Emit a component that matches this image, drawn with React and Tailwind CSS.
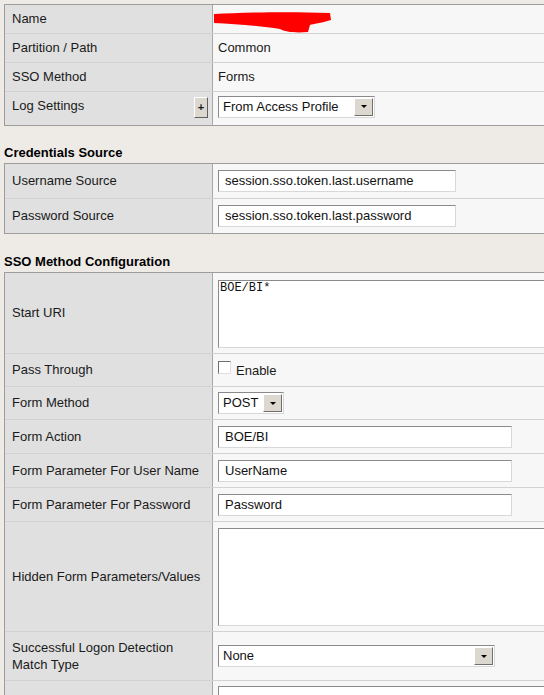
import React from 'react';

const font = { fontFamily: '"Liberation Sans", Arial, sans-serif' };

function Row({ label, h, last, children, labelClass = '' }) {
    return (
        <div className={`flex ${h} ${last ? '' : 'border-b border-[#d2d2d2]'}`}>
            <div className={`w-[208px] shrink-0 bg-[#e0e0e0] border-r border-[#a9a9a9] pl-[7px] pr-1 flex items-center ${labelClass}`}>
                {label}
            </div>
            <div className="flex-1 bg-[#f7f7f7] pl-[5px] flex items-center relative">
                {children}
            </div>
        </div>
    );
}

function Table({ children }) {
    return (
        <div className="ml-[4px] w-[620px] border border-[#9d9d9d] bg-white">
            {children}
        </div>
    );
}

function Heading({ children, h }) {
    return (
        <div className={`${h} flex items-end pl-[4px] pb-[1px] font-bold text-[13px] text-black`}>
            {children}
        </div>
    );
}

const inset = 'bg-white border border-t-[#8a8a8a] border-l-[#8a8a8a] border-b-[#d8d8d8] border-r-[#d8d8d8]';

function TextInput({ value, w }) {
    return (
        <div className={`${inset} ${w} h-[22px] flex items-center pl-[6px] text-[13px] text-[#111]`}>
            {value}
        </div>
    );
}

function DropBtn() {
    return (
        <div className="w-[19px] h-[18px] bg-[#dcd8d0] border border-t-[#ffffff] border-l-[#ffffff] border-b-[#6f6f6f] border-r-[#6f6f6f] flex items-center justify-center">
            <div className="w-0 h-0 border-l-[3px] border-r-[3px] border-t-[3px] border-l-transparent border-r-transparent border-t-black" />
        </div>
    );
}

function Select({ value, w, className = '' }) {
    return (
        <div className={`${inset} ${w} h-[22px] flex items-center justify-between pl-[4px] pr-[1px] text-[13px] text-[#111] ${className}`}>
            <span>{value}</span>
            <DropBtn />
        </div>
    );
}

function App() {
    return (
        <div className="w-[544px] h-[695px] overflow-hidden bg-[#eeebe7] text-[13px] text-[#1a1a1a]" style={font}>
            <div className="h-[4px]" />
            <Table>
                <Row label="Name" h="h-[29px]">
                    <svg className="absolute left-0 top-0" width="130" height="29" viewBox="0 0 130 29">
                        <path
                            d="M1,9 C27,8 67,6 117,8 L118,15 C108,18 100,19 97,20 L95,27 C82,28 72,27 67,24 C47,21 22,19 1,18 Z"
                            fill="#ff0000"
                        />
                    </svg>
                </Row>
                <Row label="Partition / Path" h="h-[29px]">Common</Row>
                <Row label="SSO Method" h="h-[29px]">Forms</Row>
                <Row label={
                    <div className="flex items-center justify-between w-full">
                        <span className="-mt-[6px]">Log Settings</span>
                        <div className="w-[14px] h-[21px] -mt-[3px] bg-[#dcd8d0] border border-t-white border-l-white border-b-[#5f5f5f] border-r-[#5f5f5f] flex items-center justify-center text-[11px] font-bold leading-none">+</div>
                    </div>
                } h="h-[33px]" last>
                    <Select value="From Access Profile" w="w-[157px]" className="-mt-[4px]" />
                </Row>
            </Table>

            <Heading h="h-[37px]">Credentials Source</Heading>
            <Table>
                <Row label="Username Source" h="h-[35px]">
                    <TextInput value="session.sso.token.last.username" w="w-[238px]" />
                </Row>
                <Row label="Password Source" h="h-[34px]" last>
                    <TextInput value="session.sso.token.last.password" w="w-[238px]" />
                </Row>
            </Table>

            <Heading h="h-[38px]">SSO Method Configuration</Heading>
            <Table>
                <Row label="Start URI" h="h-[81px]">
                    <div className={`${inset} w-[340px] h-[68px] self-start mt-[7px] pl-[1px] pt-[1px] text-[12px] leading-[13px] text-[#111]`} style={{ fontFamily: '"Liberation Mono", "Courier New", monospace' }}>
                        BOE/BI*
                    </div>
                </Row>
                <Row label="Pass Through" h="h-[33px]">
                    <div className="flex items-center gap-[5px]">
                        <div className="w-[13px] h-[13px] -mt-[5px] bg-white border border-t-[#707070] border-l-[#707070] border-b-[#e0e0e0] border-r-[#e0e0e0]" />
                        <span className="mt-[2px]">Enable</span>
                    </div>
                </Row>
                <Row label="Form Method" h="h-[33px]">
                    <Select value="POST" w="w-[66px]" />
                </Row>
                <Row label="Form Action" h="h-[34px]">
                    <TextInput value="BOE/BI" w="w-[294px]" />
                </Row>
                <Row label="Form Parameter For User Name" h="h-[34px]">
                    <TextInput value="UserName" w="w-[294px]" />
                </Row>
                <Row label="Form Parameter For Password" h="h-[34px]">
                    <TextInput value="Password" w="w-[294px]" />
                </Row>
                <Row label="Hidden Form Parameters/Values" h="h-[110px]">
                    <div className={`${inset} w-[340px] h-[98px] self-start mt-[6px]`} />
                </Row>
                <Row label={<span className="leading-[17px]">Successful Logon Detection<br />Match Type</span>} h="h-[49px]">
                    <Select value="None" w="w-[277px]" />
                </Row>
                <Row label="" h="h-[40px]" last>
                    <div className={`${inset} w-[340px] h-[30px] self-start mt-[5px]`} />
                </Row>
            </Table>
        </div>
    );
}

export default App;
